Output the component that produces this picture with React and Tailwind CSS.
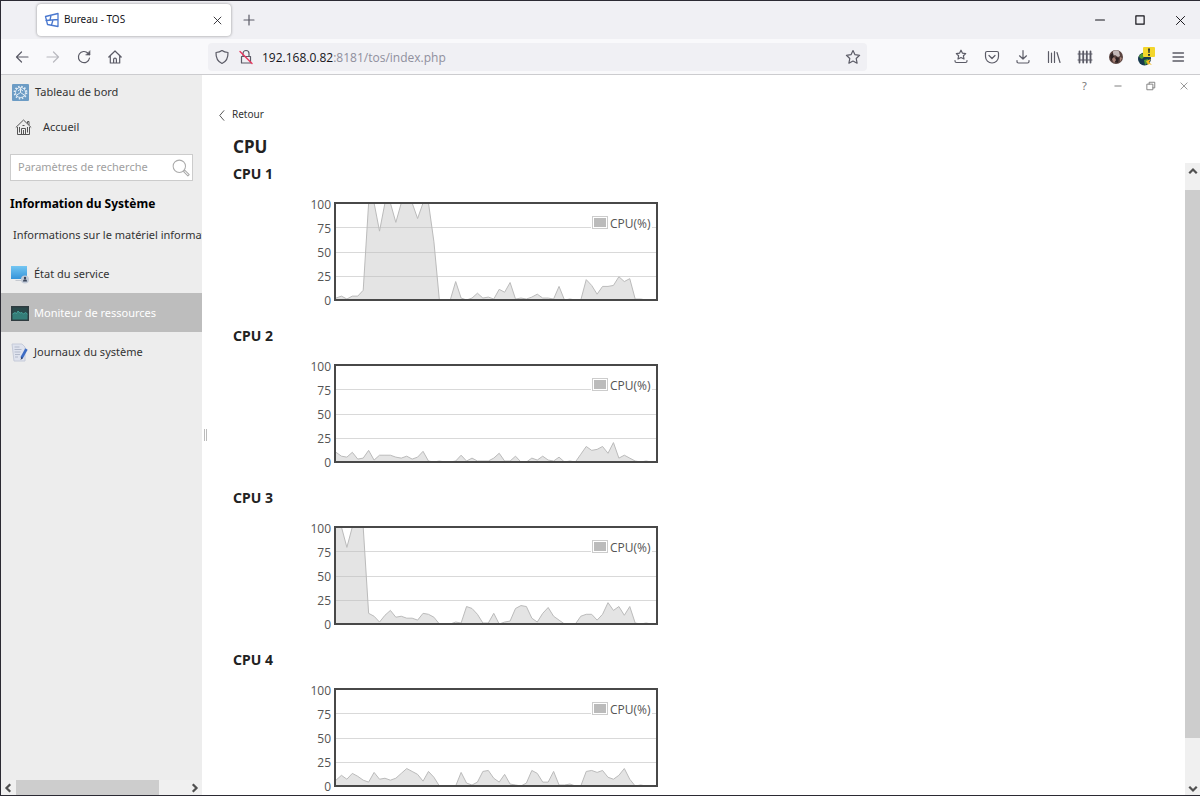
// src/App.jsx
import { useState } from "react";

const CPUS = [
  {
    name: "CPU 1",
    data: [
      2, 4, 1, 4, 4, 10, 100, 100, 71, 100, 100, 80, 100, 100, 100, 84, 100,
      100, 60, 0, 0, 0, 19, 2, 0, 2, 7, 2, 3, 1, 11, 8, 18, 1, 2, 1, 3, 6, 2, 2,
      1, 14, 0, 1, 0, 0, 21, 15, 6, 14, 14, 15, 24, 19, 22, 1, 1, 0, 0, 0,
    ],
  },
  {
    name: "CPU 2",
    data: [
      10, 6, 5, 10, 3, 4, 12, 2, 7, 7, 7, 5, 4, 6, 3, 5, 11, 1, 0, 1, 0, 0, 1,
      7, 1, 4, 1, 1, 1, 4, 9, 1, 1, 6, 0, 0, 4, 2, 6, 2, 1, 5, 0, 1, 0, 8, 16,
      12, 13, 16, 9, 20, 4, 7, 4, 1, 0, 1, 0, 0,
    ],
  },
  {
    name: "CPU 3",
    data: [
      100, 100, 79, 100, 100, 100, 11, 8, 2, 9, 14, 7, 8, 6, 6, 4, 11, 10, 7, 0,
      0, 0, 2, 1, 18, 16, 10, 1, 1, 11, 0, 2, 3, 16, 19, 18, 6, 2, 11, 17, 8, 4,
      0, 0, 0, 8, 10, 10, 4, 10, 22, 14, 18, 9, 18, 1, 0, 1, 0, 0,
    ],
  },
  {
    name: "CPU 4",
    data: [
      6, 11, 7, 13, 10, 6, 4, 14, 7, 8, 6, 8, 13, 18, 15, 12, 5, 15, 9, 0, 0, 0,
      0, 14, 3, 1, 4, 15, 16, 8, 4, 12, 2, 1, 0, 3, 16, 13, 4, 4, 15, 1, 1, 2,
      0, 0, 15, 16, 14, 16, 9, 7, 11, 18, 7, 0, 1, 0, 0, 0,
    ],
  },
];

const TICKS = [100, 75, 50, 25, 0];

function CpuChart({ name, data }) {
  const y = (v) => 115 - v * 0.97;
  const pts = data.map((v, i) => `${36 + i * 5.44},${y(v)}`).join(" ");

  return (
    <svg width="362" height="140" role="img" aria-label={name}>
      {[75, 50, 25].map((t) => (
        <path
          key={t}
          d={`M36 ${Math.round(y(t)) + 0.5}H356`}
          stroke="#d9d9d9"
        />
      ))}
      <polygon points={`36,115 ${pts} 357,115`} fill="#bbb" fillOpacity="0.4" />
      <polyline points={pts} fill="none" stroke="#bbb" />
      <rect x="35" y="18" width="322" height="97" fill="none" stroke="#484848" strokeWidth="2" />
      {/* légende */}
      <rect x="291" y="29" width="61" height="20" fill="#fff" />
      <rect x="292.5" y="31.5" width="15" height="12" fill="#fff" stroke="#ccc" />
      <rect x="294" y="33" width="12" height="9" fill="#bbb" />
      <g fill="#545454" className="font-['Open_Sans',sans-serif] text-xs">
        <text x="310" y="43">CPU(%)</text>
        {TICKS.map((t) => (
          <text key={t} x="31" y={Math.round(120 - t * 0.96)} textAnchor="end">
            {t}
          </text>
        ))}
      </g>
    </svg>
  );
}

/* ---------- icônes ---------- */

function Icon({ size = 16, children, ...rest }) {
  return (
    <svg
      width={size}
      height={size}
      viewBox="0 0 16 16"
      fill="none"
      stroke="currentColor"
      strokeWidth="1.2"
      strokeLinecap="round"
      strokeLinejoin="round"
      className="shrink-0"
      aria-hidden="true"
      {...rest}
    >
      {children}
    </svg>
  );
}

const TosLogo = () => (
  <Icon stroke="#4a78cf" strokeWidth="1.3">
    <path d="M1.5 4.500 14 1.500V14.500L3.500 12.500ZM2 8.500 14 7.500M7 3.500 6 8M9 8 7.500 13" />
  </Icon>
);
const Back = () => (
  <Icon><path d="M14 8H2.5M7.5 3 2.5 8l5 5" /></Icon>
);
const Forward = () => (
  <Icon><path d="M2 8h11.5M8.5 3l5 5-5 5" /></Icon>
);
const Reload = () => (
  <Icon><path d="M13.500 9A5.600 5.600 0 1 1 12 4.200L13.600 5.600" /><path d="M14 2v4h-4z" fill="currentColor" strokeWidth="0.6" /></Icon>
);
const Home = () => (
  <Icon><path d="M1.800 8 8 2l6.200 6M3.300 7v7h9.400V7M6.600 14v-3.500a1.400 1.400 0 0 1 2.800 0V14" /></Icon>
);
const Shield = () => (
  <Icon><path d="M8 1.500C6.300 2.800 4 3.400 2 3.500 1.800 8.500 3.500 12.500 8 14.500c4.500-2 6.200-6 6-11-2-.1-4.300-.7-6-2z" /></Icon>
);
const Lock = () => (
  <Icon>
    <path d="M3.500 7.500h9v6.500h-9zM5 7.500V4.500a3 3 0 0 1 6 0v3" />
    <path d="M2 2.500 14 14.500" stroke="#e8375f" strokeWidth="1.400" />
  </Icon>
);
const Star = () => (
  <Icon><path d="m8 1.500 2 4.200 4.600.6-3.400 3.200.9 4.700L8 12l-4.100 2.200.9-4.700L1.400 6.300 6 5.700z" /></Icon>
);
const StarTray = () => (
  <Icon>
    <path d="m8 1.200 1.500 3 3.200.4-2.300 2.200.6 3.200L8 8.500 5 10l.6-3.200-2.300-2.200 3.200-.4zM2 11.500v.5q0 1.500 1.500 1.500h9q1.500 0 1.500-1.500v-.5" />
  </Icon>
);
const Pocket = () => (
  <Icon><path d="M3 2.500h10q1.500 0 1.500 1.500v3.500a6.500 6.500 0 0 1-13 0V4Q1.500 2.500 3 2.500zM5 6.500l3 3 3-3" /></Icon>
);
const Download = () => (
  <Icon><path d="M8 1.500v8.500M4.500 6.800 8 10l3.500-3.200M2 11.500v1Q2 14 3.500 14h9q1.500 0 1.500-1.500v-1" /></Icon>
);
const Library = () => (
  <Icon><path d="M2.500 2.500v11M5.500 4v9.500M8.500 2.500v11M11 3.500l3 10" /></Icon>
);
const Fence = () => (
  <Icon>
    <path d="M2.500 2.500v11M6.200 2.500v11M9.800 2.500v11M13.500 2.500v11" strokeWidth="1.800" />
    <path d="M1 5h14M1 11h14" strokeWidth="1" />
  </Icon>
);
const Avatar = () => (
  <Icon stroke="none">
    <circle cx="8" cy="8" r="7" fill="#5b4440" />
    <path d="M5 2.500Q8 0 11 2.500L12 7l-2 1-3-2-2 1z" fill="#c4b9b8" />
    <path d="M2 6l3-2 1 4-3 4zM8 8l3 1-1 5-3-1z" fill="#2e2222" />
    <path d="M4 10l2-2 2 3-2 3zM12 8l2 1-2 4z" fill="#a98378" />
  </Icon>
);
const Globe = () => (
  <svg width="19" height="20" viewBox="0 0 19 20" aria-hidden="true">
    <circle cx="7.500" cy="12" r="6.500" fill="#17394f" />
    <path d="M2 9q2-3 5-2.500L8 9l-3 3-2-1zM7 13l4-1 1 3-4 3z" fill="#4f9a35" />
    <path d="m9 14 5-2-2 3 3 3-3-1-1 1z" fill="#f2b91d" />
    <rect x="6" y="0" width="12" height="10" rx="1" fill="#f3d62c" />
    <path d="M11 1.500h2l-.4 4.500h-1.200zM11 7h2v1.700h-2z" fill="#26322b" />
  </svg>
);
const Menu = () => (
  <Icon strokeWidth="1.300"><path d="M3 4h10.500M3 8h10.500M3 12h10.500" /></Icon>
);
const Cross = ({ size = 16 }) => (
  <Icon size={size} strokeWidth="1.200"><path d="m3 3 10 10M13 3 3 13" /></Icon>
);
const Chevron = ({ d }) => (
  <Icon size={12} strokeWidth="3" strokeLinecap="butt" strokeLinejoin="miter"><path d={d} /></Icon>
);

const Dashboard = () => (
  <svg width="17" height="17" viewBox="0 0 17 17" fill="none" aria-hidden="true">
    <rect width="17" height="17" rx="1" fill="#6c9cc5" />
    <circle cx="8.500" cy="8.500" r="6" stroke="#e2edf6" strokeWidth="1.800" strokeDasharray="1.500 1.640" />
    <circle cx="8.500" cy="8.500" r="5" stroke="#e2edf6" />
    <path d="M8.500 4v4.500L4.800 11M8.500 8.500l3.700 2.500M6 7l2.500-2L11 7" stroke="#e2edf6" />
  </svg>
);
const House = () => (
  <svg width="17" height="17" viewBox="0 0 17 17" fill="none" stroke="#555" aria-hidden="true">
    <path d="M.8 8.500 8.500 1 16.200 8.500M12.500 4.500V2.500h1.500v3.500M2.500 8v7.500h12V8M4.500 8v5.500M12.500 8v5.500M6.500 15.500V9.500h4v6M8.500 11v4M7.500 6.500h2" />
  </svg>
);
const ServiceIcon = () => (
  <svg width="18" height="18" viewBox="0 0 18 18" aria-hidden="true">
    <defs>
      <linearGradient id="screen" x1="0" y1="0" x2="0" y2="1">
        <stop offset="0" stopColor="#74c6f2" />
        <stop offset="1" stopColor="#3594da" />
      </linearGradient>
    </defs>
    <path d="M0 0h16v13H0z" fill="url(#screen)" />
    <path d="M5 14h6v1H4z" fill="#c5c9d0" />
    <circle cx="14" cy="13.500" r="4" fill="#c3cbd8" />
    <circle cx="14" cy="12" r="1.200" fill="#39455a" />
    <path d="M11.800 15.500q.2-2.200 2.200-2.200t2.200 2.200z" fill="#39455a" />
  </svg>
);
const MonitorIcon = () => (
  <svg width="18" height="15" viewBox="0 0 18 15" aria-hidden="true">
    <rect width="18" height="15" fill="#2f3c40" />
    <rect x="1.500" y="1.500" width="15" height="12" fill="#29494a" />
    <path d="M1.500 8 4 6.500 5.500 7.500 7 5l2 2 2-.5L12.500 8l2-1.500 2 1.500v5.500h-15z" fill="#347d78" />
    <path d="M1.500 8 4 6.500 5.500 7.500 7 5l2 2 2-.5L12.500 8l2-1.500 2 1.500" fill="none" stroke="#4fb5ac" strokeWidth=".7" />
  </svg>
);
const JournalIcon = () => (
  <svg width="18" height="19" viewBox="0 0 18 19" fill="none" aria-hidden="true">
    <path d="M1 1h10l3 3v14H3z" fill="#dfe3ee" stroke="#c6cbd9" />
    <path d="M3.500 4h5M3.500 6.500h7M3.500 9h6M4 11.500h5M4 14h3" stroke="#b3bacb" />
    <path d="m15.500 6-5 9" stroke="#3d6cc4" strokeWidth="2.600" />
    <path d="m10.500 14-1 3 2.500-2z" fill="#26375c" />
  </svg>
);

const NAV = [
  { label: "Informations sur le matériel informatique" },
  { label: "État du service", icon: <ServiceIcon /> },
  { label: "Moniteur de ressources", icon: <MonitorIcon /> },
  { label: "Journaux du système", icon: <JournalIcon /> },
];

function IconButton({ label, className = "", children }) {
  return (
    <button
      type="button"
      aria-label={label}
      className={`flex h-7 w-[31px] shrink-0 items-center justify-center ${className}`}
    >
      {children}
    </button>
  );
}

/* ---------- navigateur ---------- */

function BrowserBar() {
  return (
    <header className="shrink-0 border-b border-[#cccccf] text-[#5b5b66]">
      <div className="flex h-[38px] items-center bg-[#f0f0f4] pl-9 text-[#15141a]">
        <div className="flex h-8 w-[194px] items-center rounded-sm bg-white pr-2 pl-[7px] shadow-[0_0_3px_rgba(0,0,0,0.4)]">
          <TosLogo />
          <span className="ml-1 flex-1 text-[10px]">Bureau - TOS</span>
          <button type="button" aria-label="Fermer l'onglet"><Cross size={11} /></button>
        </div>
        <button type="button" aria-label="Nouvel onglet" className="ml-2.5 text-[#5b5b66]">
          <Icon><path d="M8 3v10M3 8h10" /></Icon>
        </button>
        <div className="ml-auto flex">
          <button type="button" aria-label="Réduire" className="flex w-10 justify-center">
            <Icon size={12} strokeWidth="1.400"><path d="M2 8h12" /></Icon>
          </button>
          <button type="button" aria-label="Agrandir" className="flex w-10 justify-center">
            <Icon size={12} strokeWidth="1.600"><path d="M2.500 2.500h11v11h-11z" /></Icon>
          </button>
          <button type="button" aria-label="Fermer" className="flex w-10 justify-center">
            <Cross size={13} />
          </button>
        </div>
      </div>

      <div className="flex h-[35px] items-center bg-[#f9f9fb] pr-[7px] pl-[5px]">
        <IconButton label="Précédent"><Back /></IconButton>
        <IconButton label="Suivant" className="opacity-40"><Forward /></IconButton>
        <IconButton label="Actualiser"><Reload /></IconButton>
        <IconButton label="Accueil"><Home /></IconButton>
        <div className="mr-[78px] ml-[78px] flex h-7 min-w-0 flex-1 items-center rounded bg-[#f0f0f4] px-1.5">
          <Shield />
          <span className="ml-2"><Lock /></span>
          <div className="ml-2 flex-1 truncate pt-0.5 font-['Open_Sans',sans-serif] text-xs text-[#8f8f9d]">
            <span className="text-[#15141a]">192.168.0.82</span>:8181/tos/index.php
          </div>
          <Star />
        </div>
        <IconButton label="Marque-pages"><StarTray /></IconButton>
        <IconButton label="Pocket"><Pocket /></IconButton>
        <IconButton label="Téléchargements"><Download /></IconButton>
        <IconButton label="Bibliothèque"><Library /></IconButton>
        <IconButton label="Onglets"><Fence /></IconButton>
        <IconButton label="Profil"><Avatar /></IconButton>
        <IconButton label="Extension"><Globe /></IconButton>
        <IconButton label="Menu"><Menu /></IconButton>
      </div>
    </header>
  );
}

/* ---------- menu latéral ---------- */

function Sidebar({ active, onSelect }) {
  const [search, setSearch] = useState("");

  return (
    <aside className="flex w-[201px] shrink-0 flex-col overflow-hidden bg-[#ededed] text-[11px]">
      <div className="flex h-[34px] items-center gap-1.5 pl-[11px]">
        <Dashboard />
        Tableau de bord
      </div>
      <a href="#accueil" className="flex h-9 items-center gap-[11px] pl-3.5">
        <House />
        Accueil
      </a>

      <label className="mx-[9px] mt-[9px] flex h-[27px] shrink-0 items-center border border-[#ccc] bg-white pr-0.5 pl-[7px]">
        <input
          type="text"
          aria-label="Paramètres de recherche"
          placeholder="Paramètres de recherche"
          className="min-w-0 flex-1 outline-none placeholder:text-[#a0a0a0]"
          value={search}
          onChange={(e) => setSearch(e.target.value)}
        />
        <Icon size={18} stroke="#aaa" strokeWidth="0.9">
          <circle cx="6.500" cy="6.500" r="5.500" />
          <path d="m10.500 10.500 1-.3 3.800 3.600-1.200 1.200-3.800-3.800z" />
        </Icon>
      </label>

      <h2 className="mt-3 pl-[9px] text-xs leading-[22px] font-bold text-black">
        Information du Système
      </h2>
      <nav>
        {NAV.map((item, i) => (
          <button
            key={item.label}
            type="button"
            onClick={() => onSelect(i)}
            className={`flex h-[39px] w-full items-center pt-0.5 whitespace-nowrap ${
              i === active ? "bg-[#bdbdbd] text-white" : ""
            } ${item.icon ? "gap-[5px] pl-2.5" : "pl-3"}`}
          >
            {item.icon}
            {item.label}
          </button>
        ))}
      </nav>

      {/* barre de défilement horizontale */}
      <div className="mt-auto flex h-[15px] shrink-0 items-center justify-between bg-[#f0f0f0] px-px text-[#505050]">
        <Chevron d="M11 3 6 8l5 5" />
        <div className="mr-auto ml-0.5 h-full w-[72%] bg-[#cdcdcd]" />
        <Chevron d="m5 3 5 5-5 5" />
      </div>
    </aside>
  );
}

export default function App() {
  const [active, setActive] = useState(2);

  return (
    <div className="flex h-screen flex-col overflow-hidden border-y border-l border-[#2b2a33] bg-white font-['Noto_Sans',sans-serif] text-xs text-[#333]">
      <BrowserBar />

      <div className="flex min-h-0 flex-1">
        <Sidebar active={active} onSelect={setActive} />

        {/* poignée de redimensionnement */}
        <div className="flex w-[7px] shrink-0 items-center justify-center">
          <div className="h-3 w-[3px] border-x border-[#bbb]" />
        </div>

        <main className="flex min-w-0 flex-1 flex-col">
          <div className="flex h-[22px] shrink-0 items-center justify-end text-[11px] text-[#777]">
            <button type="button" className="w-[33px]">?</button>
            <button type="button" aria-label="Réduire" className="flex w-[33px] justify-center">
              <Icon size={10}><path d="M3 8h10" strokeWidth="1.500" /></Icon>
            </button>
            <button type="button" aria-label="Restaurer" className="flex w-[33px] justify-center">
              <Icon size={10} strokeWidth="1.400"><path d="M2 5h9v9H2zM5 5V2h9v9h-3" /></Icon>
            </button>
            <button type="button" aria-label="Fermer" className="flex w-[33px] justify-center">
              <Cross size={10} />
            </button>
          </div>

          <div className="shrink-0 pt-2">
            <a href="#retour" className="flex h-5 items-center gap-1 pl-2 text-[10px]">
              <Icon size={11}><path d="M10 1 4 8l6 7" /></Icon>
              Retour
            </a>
            <h1 className="mt-[9px] mb-[3px] pl-6 text-[17px] leading-[26px] font-bold text-[#222]">CPU</h1>
          </div>

          <div className="flex min-h-0 flex-1">
            <div className="min-w-0 flex-1 overflow-hidden pl-6">
              {CPUS.map((cpu) => (
                <section key={cpu.name}>
                  <h2 className="text-sm leading-[22px] font-bold text-[#222]">{cpu.name}</h2>
                  <div className="pl-[67px]">
                    <CpuChart name={cpu.name} data={cpu.data} />
                  </div>
                </section>
              ))}
            </div>
            {/* barre de défilement verticale */}
            <div className="flex w-[15px] shrink-0 flex-col items-center bg-[#f0f0f0] pt-0.5 text-[#505050]">
              <Chevron d="m3 11 5-5 5 5" />
              <div className="mt-[13px] mb-auto h-[87%] w-full bg-[#cdcdcd]" />
              <Chevron d="m3 5 5 5 5-5" />
            </div>
          </div>
        </main>
      </div>
    </div>
  );
}
